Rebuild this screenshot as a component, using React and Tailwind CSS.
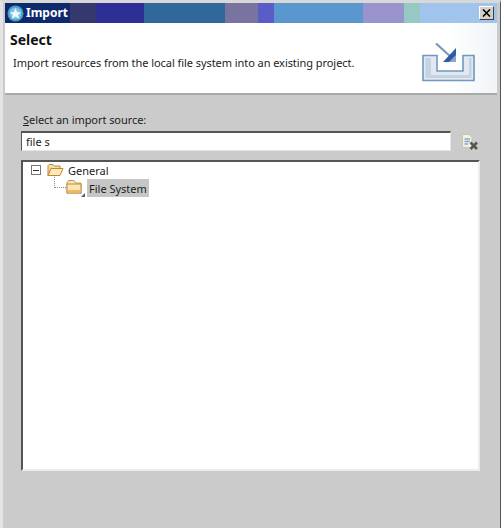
const segments = [
  ["w-[65px]", "bg-[#0e2a6c]"],
  ["w-[26px]", "bg-[#35386c]"],
  ["w-[48px]", "bg-[#2e2f96]"],
  ["w-[81px]", "bg-[#30689c]"],
  ["w-[33px]", "bg-[#78749f]"],
  ["w-[16px]", "bg-[#5a5cc8]"],
  ["w-[89px]", "bg-[#5b97cf]"],
  ["w-[41px]", "bg-[#9a94cc]"],
  ["w-[16px]", "bg-[#96c8c4]"],
  ["flex-1", "bg-[#a0c4ec]"],
];

function AppIcon() {
  return (
    <svg width="17" height="17" viewBox="0 0 17 17" className="shrink-0">
      <circle cx="8.5" cy="8.5" r="8" fill="#4a9cc8" />
      <circle cx="8.5" cy="8.5" r="6" fill="#7cc4e0" />
      <path d="M8.5 3 L10 7 L14 7.5 L11 10 L12.5 14 L8.5 11.5 L4.5 14 L6 10 L3 7.5 L7 7 Z" fill="#f2f8fc" />
    </svg>
  );
}

function BannerIcon() {
  return (
    <svg width="53" height="39" viewBox="0 0 53 39">
      <path d="M1 12.5 H15 V28 H41 V12.5 H52 V37.5 H1 Z" fill="#e2e8ef" stroke="#7098c0" strokeWidth="1.6" />
      <path d="M3.5 15 H9 V32 H47 V15 H49.5 V35 H3.5 Z" fill="#c4d2e2" />
      <path d="M14 0.5 L29 14" stroke="#7d97b8" strokeWidth="2.2" />
      <path d="M34 5 V19 H21 Z" fill="#2f5ba6" />
      <path d="M34 12 V19 H27 Z" fill="#86a7d2" />
    </svg>
  );
}

function FolderOpen() {
  return (
    <svg width="17" height="14" viewBox="0 0 17 14" className="shrink-0">
      <path d="M1 12.5 V2.5 L2 1.5 H6 L7.5 3 H13 V5.5 H4 L1 12.5 Z" fill="#f6dca0" stroke="#b98a3c" />
      <path d="M1 12.5 L4 5.5 H16 L13 12.5 Z" fill="#fbe8bc" stroke="#c08a2c" />
    </svg>
  );
}

function FolderClosed() {
  return (
    <svg width="20" height="18" viewBox="0 0 20 18" className="shrink-0">
      <path d="M1 4 L2.5 1.5 H8 L10 4 H15 V14 H1 Z" fill="#f8e4b4" stroke="#c59a50" />
      <rect x="1" y="5" width="14" height="9" fill="#fbe6b4" stroke="#c08a3a" />
      <rect x="2" y="11" width="12" height="2.5" fill="#f3b860" />
      <path d="M19 14 V18 H15 Z" fill="#3d5f96" />
    </svg>
  );
}

function ClearIcon() {
  return (
    <svg width="18" height="18" viewBox="0 0 18 18">
      <path d="M1.5 1.5 H8 L11 4.5 V14.5 H1.5 Z" fill="#f0f2ea" stroke="#c9c79c" />
      <path d="M3.5 6 H9 M3.5 8.5 H9 M3.5 11 H7" stroke="#8ba4c4" strokeWidth="1.4" />
      <path d="M9.5 9.5 L16 16 M16 9.5 L9.5 16" stroke="#555555" strokeWidth="2.6" />
    </svg>
  );
}

export default function App() {
  const font = { fontFamily: '"Noto Sans", Tahoma, sans-serif' };
  return (
    <div
      className="h-[528px] w-[501px] overflow-hidden flex flex-col bg-[#cbcbcb] border-t-[3px] border-l-[3px] border-r border-t-[#d8d8d8] border-l-[#e4e4e4] border-r-[#555555] pl-[2px] pr-[3px] text-[#1c1c1c] text-[11px] leading-none"
      style={font}
    >
      <div className="h-[20px] shrink-0 relative flex">
        {segments.map(([w, c], i) => (
          <div key={i} className={`${w} ${c}`} />
        ))}
        <div className="absolute inset-0 flex items-center pl-[2px] pr-[3px] gap-[2px]">
          <AppIcon />
          <span className="text-white font-bold text-[12px] flex-1">Import</span>
          <div className="w-[15px] h-[14px] bg-[#d4d0c8] border border-t-white border-l-white border-r-[#404040] border-b-[#404040] flex items-center justify-center">
            <svg width="9" height="8" viewBox="0 0 9 8">
              <path d="M1 0.5 L8 7.5 M8 0.5 L1 7.5" stroke="#000000" strokeWidth="1.6" />
            </svg>
          </div>
        </div>
      </div>

      <div className="h-[72px] shrink-0 bg-linear-to-r from-white from-90% to-[#f0f4f8] border-b-2 border-b-[#a9a9a9] flex justify-between pl-[5px] pr-[22px]">
        <div className="flex flex-col pt-[10px]">
          <span className="font-bold text-[14px] leading-[14px] text-[#111111]">Select</span>
          <span className="mt-[9px] ml-[3px] text-[11px] leading-[14px] tracking-[-0.06px]">
            Import resources from the local file system into an existing project.
          </span>
        </div>
        <div className="pt-[20px]">
          <BannerIcon />
        </div>
      </div>

      <div className="flex-1 flex flex-col pl-[16px] pr-[2px] pt-[18px]">
        <label className="text-[11px] leading-[14px] ml-[2px] tracking-[-0.06px]">
          <span className="underline">S</span>elect an import source:
        </label>
        <div className="flex items-center mt-[4px]">
          <div className="w-[430px] h-[20px] bg-white border border-t-2 border-t-[#555555] border-l-[#555555] border-r-[#e6e6e6] border-b-[#e6e6e6] pl-[4px] flex items-center text-[11px]">
            file s
          </div>
          <div className="ml-[10px] mt-[2px]">
            <ClearIcon />
          </div>
        </div>
        <div className="mt-[9px] h-[311px] w-[459px] bg-white border-2 border-t-[#555555] border-l-[#555555] border-r-[#ececec] border-b-[#ececec] relative">
          <div className="flex items-center h-[18px] pl-[8px] -mt-px">
            <div className="w-[10px] h-[10px] border border-[#777777] flex items-center justify-center">
              <div className="w-[6px] h-px bg-[#333333]" />
            </div>
            <div className="ml-[6px]"><FolderOpen /></div>
            <span className="ml-[4px] text-[11px]">General</span>
          </div>
          <div className="flex items-center h-[18px] pl-[43px] relative">
            <div className="absolute left-[31px] top-[-2px] w-[12px] h-[11px] border-l border-b border-dotted border-[#888888]" />
            <FolderClosed />
            <span className="ml-[1px] h-[18px] px-[2px] flex items-center bg-[#c6c6c6] text-[11px]">File System</span>
          </div>
        </div>
      </div>
    </div>
  );
}
